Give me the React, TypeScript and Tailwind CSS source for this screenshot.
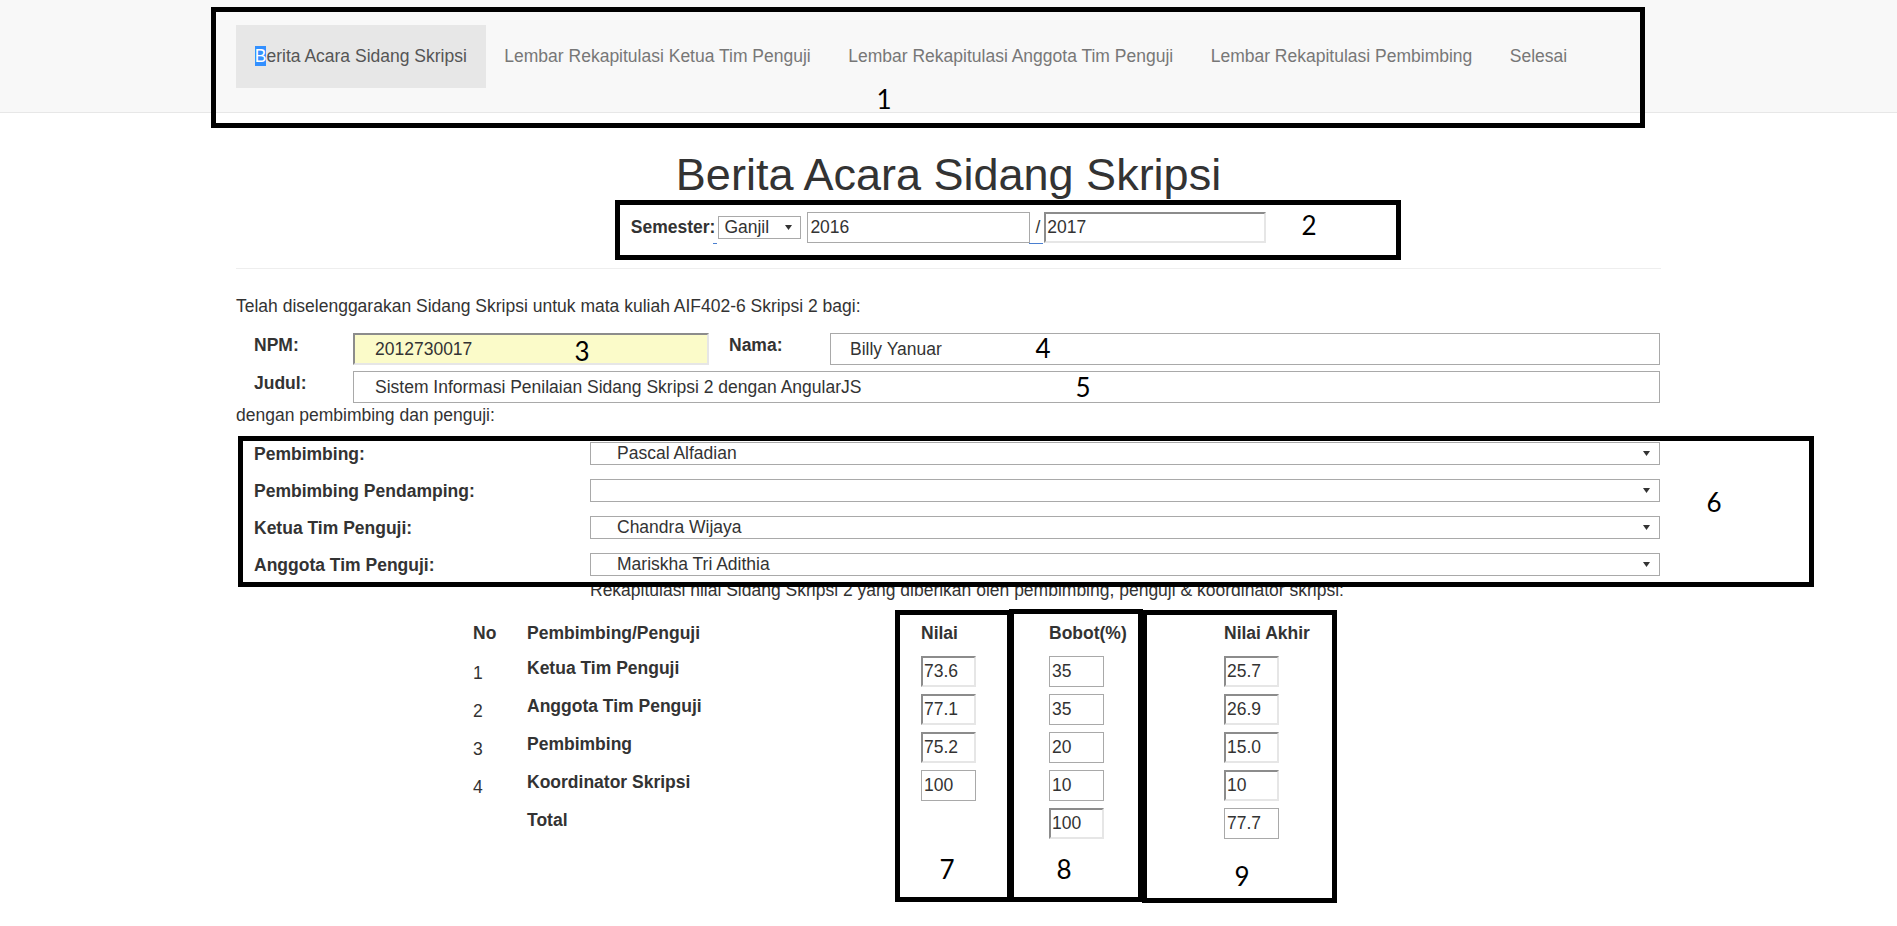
import React from "react";

const INSET =
  "border-2 border-t-[#8c8c8c] border-l-[#8c8c8c] border-r-[#e6e6e6] border-b-[#e6e6e6]";
const PLAIN = "border border-[#a9a9a9]";

function Field({ value, className }: { value: string; className: string }) {
  return (
    <input
      readOnly
      value={value}
      className={`text-[17.5px] text-[#333] outline-none ${className}`}
    />
  );
}

function Arrow() {
  return (
    <svg width="7" height="5" viewBox="0 0 7 5" className="shrink-0">
      <path d="M0 0H7L3.5 5Z" fill="#333" />
    </svg>
  );
}

function Select({ text, className }: { text: string; className: string }) {
  return (
    <div
      className={`flex items-center justify-between border border-[#a9a9a9] bg-white text-[17.5px] text-[#333] ${className}`}
    >
      <span>{text}</span>
      <Arrow />
    </div>
  );
}

function Box({ className }: { className: string }) {
  return (
    <div
      className={`pointer-events-none absolute border-[5px] border-black ${className}`}
    />
  );
}

function Num({ n, className }: { n: string; className: string }) {
  return (
    <span
      className={`pointer-events-none absolute -translate-x-1/2 -translate-y-1/2 font-['Lato',sans-serif] text-[26px] leading-none text-black ${className}`}
    >
      {n}
    </span>
  );
}

const navItems = [
  "Lembar Rekapitulasi Ketua Tim Penguji",
  "Lembar Rekapitulasi Anggota Tim Penguji",
  "Lembar Rekapitulasi Pembimbing",
  "Selesai",
];

const people = [
  { label: "Pembimbing:", value: "Pascal Alfadian" },
  { label: "Pembimbing Pendamping:", value: "" },
  { label: "Ketua Tim Penguji:", value: "Chandra Wijaya" },
  { label: "Anggota Tim Penguji:", value: "Mariskha Tri Adithia" },
];

type Row = {
  no: string;
  name: string;
  nilai?: { v: string; inset: boolean };
  bobot: { v: string; inset: boolean };
  akhir: { v: string; inset: boolean };
};

const rows: Row[] = [
  {
    no: "1",
    name: "Ketua Tim Penguji",
    nilai: { v: "73.6", inset: true },
    bobot: { v: "35", inset: false },
    akhir: { v: "25.7", inset: true },
  },
  {
    no: "2",
    name: "Anggota Tim Penguji",
    nilai: { v: "77.1", inset: true },
    bobot: { v: "35", inset: false },
    akhir: { v: "26.9", inset: true },
  },
  {
    no: "3",
    name: "Pembimbing",
    nilai: { v: "75.2", inset: true },
    bobot: { v: "20", inset: false },
    akhir: { v: "15.0", inset: true },
  },
  {
    no: "4",
    name: "Koordinator Skripsi",
    nilai: { v: "100", inset: false },
    bobot: { v: "10", inset: false },
    akhir: { v: "10", inset: true },
  },
  {
    no: "",
    name: "Total",
    bobot: { v: "100", inset: true },
    akhir: { v: "77.7", inset: false },
  },
];

function Cell({ v, inset }: { v: string; inset: boolean }) {
  return (
    <Field
      value={v}
      className={`h-[31px] w-[55px] bg-white ${inset ? INSET + " pl-[1px]" : PLAIN + " pl-[2px]"}`}
    />
  );
}

export default function App() {
  return (
    <div className="relative min-h-[926px] bg-white font-['Liberation_Sans',Arial,sans-serif] text-[#333]">
      <nav className="h-[113px] border-b border-[#e7e7e7] bg-[#f8f8f8]">
        <ul className="mx-auto flex w-[1425px] pt-[25px] text-[17.5px] leading-[25px] text-[#777]">
          <li className="bg-[#e7e7e7] px-[18.75px] py-[19px] text-[#555]">
            <span className="bg-[#3390ff] text-white">B</span>erita Acara Sidang Skripsi
          </li>
          {navItems.map((t) => (
            <li key={t} className="px-[18.75px] py-[19px]">
              {t}
            </li>
          ))}
        </ul>
      </nav>

      <main className="mx-auto w-[1425px] text-[17.5px] leading-[25px]">
        <h1 className="mt-[37px] text-center text-[45px] font-normal leading-[50px]">
          Berita Acara Sidang Skripsi
        </h1>

        <div className="mt-[12px] flex h-[31px] items-center justify-center">
          <span className="font-bold">Semester:</span>
          <Select text="Ganjil" className="ml-[3px] h-[23px] w-[83px] pl-[5px] pr-[8px]" />
          <Field value="2016" className={`ml-[6px] h-[31px] w-[223px] bg-white pl-[2px] ${PLAIN}`} />
          <span className="ml-[5px]">/</span>
          <Field value="2017" className={`ml-[4px] h-[31px] w-[222px] bg-white pl-[1px] ${INSET}`} />
        </div>

        <div className="mt-[25px] h-px bg-[#eee]" />

        <p className="mt-[25px]">
          Telah diselenggarakan Sidang Skripsi untuk mata kuliah AIF402-6 Skripsi 2 bagi:
        </p>

        <div className="mt-[14px] flex items-start">
          <span className="w-[117px] pl-[18px] font-bold">NPM:</span>
          <Field
            value="2012730017"
            className={`h-[32px] w-[356px] bg-[#fbfbc9] pl-[20px] ${INSET}`}
          />
          <span className="w-[121px] pl-[20px] font-bold">Nama:</span>
          <Field value="Billy Yanuar" className={`h-[32px] w-[830px] bg-white pl-[19px] ${PLAIN}`} />
        </div>

        <div className="mt-[6px] flex items-start">
          <span className="w-[117px] pl-[18px] font-bold">Judul:</span>
          <Field
            value="Sistem Informasi Penilaian Sidang Skripsi 2 dengan AngularJS"
            className={`h-[32px] w-[1307px] bg-white pl-[21px] ${PLAIN}`}
          />
        </div>

        <p>dengan pembimbing dan penguji:</p>

        <div className="mt-[14px] flex flex-col gap-[12px]">
          {people.map((p) => (
            <div key={p.label} className="flex h-[25px] items-start">
              <span className="w-[354px] pl-[18px] font-bold">{p.label}</span>
              <Select text={p.value} className="h-[23px] w-[1070px] pl-[26px] pr-[9px]" />
            </div>
          ))}
        </div>

        <p className="pl-[354px]">
          Rekapitulasi nilai Sidang Skripsi 2 yang diberikan oleh pembimbing, penguji &amp; koordinator skripsi:
        </p>

        <div className="ml-[237px] mt-[18px] pb-[40px]">
          <div className="grid h-[35px] grid-cols-[54px_394px_128px_175px_auto] font-bold">
            <span>No</span>
            <span>Pembimbing/Penguji</span>
            <span>Nilai</span>
            <span>Bobot(%)</span>
            <span>Nilai Akhir</span>
          </div>
          {rows.map((r) => (
            <div
              key={r.name}
              className="grid h-[38px] grid-cols-[54px_394px_128px_175px_auto] items-start"
            >
              <span className="pt-[2px] leading-[31px]">{r.no}</span>
              <span className="font-bold leading-[25px]">{r.name}</span>
              <span>{r.nilai ? <Cell v={r.nilai.v} inset={r.nilai.inset} /> : null}</span>
              <span>
                <Cell v={r.bobot.v} inset={r.bobot.inset} />
              </span>
              <span>
                <Cell v={r.akhir.v} inset={r.akhir.inset} />
              </span>
            </div>
          ))}
        </div>
      </main>

      {/* focus underline artifacts */}
      <span className="absolute left-[713px] top-[243px] h-px w-[4px] bg-[#4a7fd0]" />
      <span className="absolute left-[1029px] top-[243px] h-px w-[14px] bg-[#4a7fd0]" />

      {/* annotation overlays */}
      <Box className="left-[211px] top-[7px] h-[121px] w-[1434px]" />
      <Box className="left-[615px] top-[200px] h-[60px] w-[786px]" />
      <Box className="left-[238px] top-[436px] h-[151px] w-[1576px]" />
      <Box className="left-[895px] top-[610px] h-[292px] w-[117px]" />
      <Box className="left-[1009px] top-[609px] h-[293px] w-[134px]" />
      <Box className="left-[1142px] top-[610px] h-[293px] w-[195px]" />

      <Num n="1" className="left-[884px] top-[99px]" />
      <Num n="2" className="left-[1309px] top-[225px]" />
      <Num n="3" className="left-[582px] top-[351px]" />
      <Num n="4" className="left-[1043px] top-[348px]" />
      <Num n="5" className="left-[1083px] top-[387px]" />
      <Num n="6" className="left-[1714px] top-[502px]" />
      <Num n="7" className="left-[947px] top-[869px]" />
      <Num n="8" className="left-[1064px] top-[869px]" />
      <Num n="9" className="left-[1242px] top-[876px]" />
    </div>
  );
}
